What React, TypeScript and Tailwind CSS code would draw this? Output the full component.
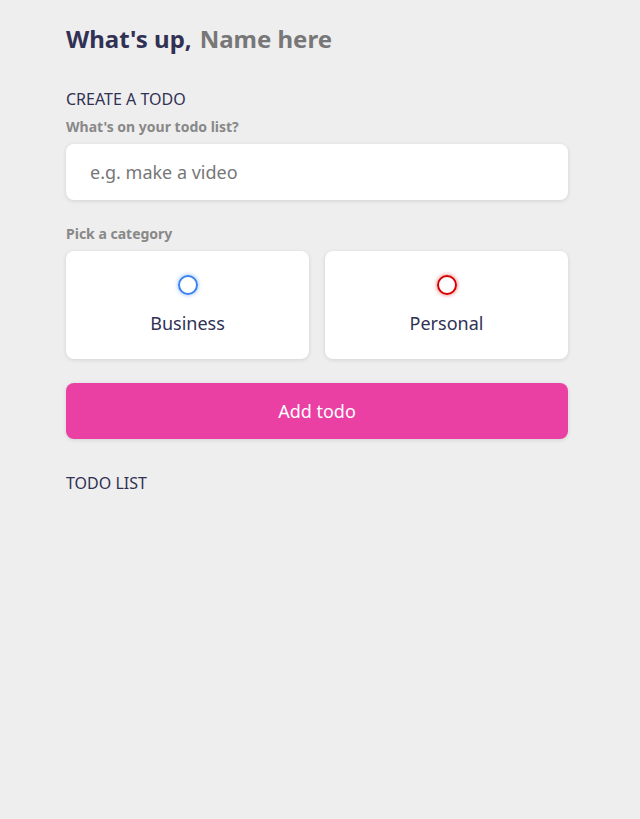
import React, { useState } from 'react';

const App = () => {
  const [text, setText] = useState('');
  const [category, setCategory] = useState('');

  return (
    <div className="min-h-[819px] bg-[#eeeeee] font-['Noto_Sans',sans-serif] text-[#313154]">
      <main className="w-[502px] ml-[66px] pt-[21px]">
        <section className="flex items-center gap-2 mb-[30px]">
          <h2 className="text-[24px] font-bold leading-[36px]">What's up,</h2>
          <input
            type="text"
            placeholder="Name here"
            className="text-[24px] font-bold leading-[36px] bg-transparent outline-none text-[#777777] placeholder:text-[#777777] w-[200px]"
          />
        </section>

        <section>
          <h3 className="text-[16px] leading-[24px] mb-[6px]">CREATE A TODO</h3>
          <h4 className="text-[14px] font-bold text-[#888888] leading-[20px] mb-[7px]">What's on your todo list?</h4>
          <input
            type="text"
            value={text}
            onChange={(e) => setText(e.target.value)}
            placeholder="e.g. make a video"
            className="w-full h-[56px] px-6 rounded-lg bg-white text-[18px] outline-none shadow-[0_1px_4px_rgba(0,0,0,0.12)] placeholder:text-[#777777]"
          />

          <h4 className="text-[14px] font-bold text-[#888888] leading-[20px] mt-[24px] mb-[7px]">Pick a category</h4>
          <div className="grid grid-cols-2 gap-4 mb-6">
            <label className="h-[108px] bg-white rounded-lg shadow-[0_1px_4px_rgba(0,0,0,0.12)] flex flex-col items-center pt-[24px] cursor-pointer">
              <input
                type="radio"
                name="category"
                className="hidden"
                checked={category === 'business'}
                onChange={() => setCategory('business')}
              />
              <span className="w-5 h-5 rounded-full border-2 border-[#3a82ee] shadow-[0_0_4px_rgba(58,130,238,0.6)]"></span>
              <div className="text-[18px] leading-[26px] mt-[15px]">Business</div>
            </label>
            <label className="h-[108px] bg-white rounded-lg shadow-[0_1px_4px_rgba(0,0,0,0.12)] flex flex-col items-center pt-[24px] cursor-pointer">
              <input
                type="radio"
                name="category"
                className="hidden"
                checked={category === 'personal'}
                onChange={() => setCategory('personal')}
              />
              <span className="w-5 h-5 rounded-full border-2 border-[#d60000] shadow-[0_0_4px_rgba(214,0,0,0.6)]"></span>
              <div className="text-[18px] leading-[26px] mt-[15px]">Personal</div>
            </label>
          </div>

          <button className="w-full h-[56px] rounded-lg bg-[#ea40a4] text-white text-[18px] shadow-[0_1px_4px_rgba(0,0,0,0.12)]">
            Add todo
          </button>
        </section>

        <section className="mt-[32px]">
          <h3 className="text-[16px] leading-[24px]">TODO LIST</h3>
        </section>
      </main>
    </div>
  );
};

export default App;
